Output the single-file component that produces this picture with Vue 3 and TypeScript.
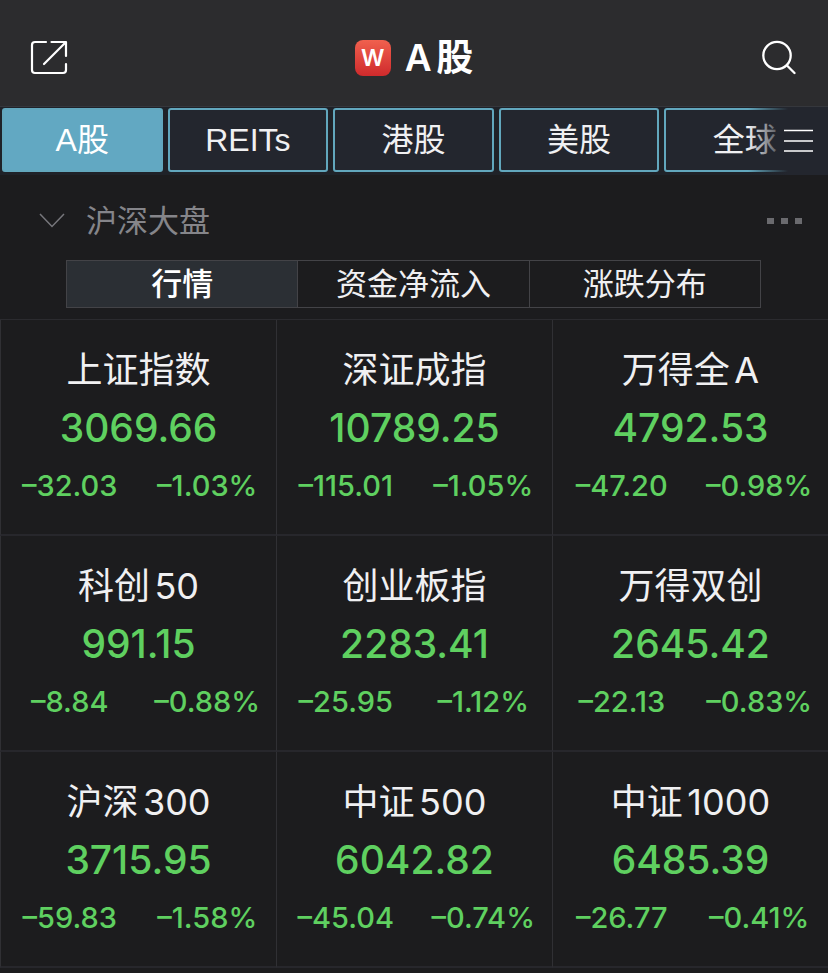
<script setup lang="ts">
import { ref } from 'vue'

interface Quote {
  name: string
  price: string
  change: string
  percent: string
}

const markets: string[] = ['A股', 'REITs', '港股', '美股', '全球']
const views: string[] = ['行情', '资金净流入', '涨跌分布']
const market = ref(0)
const view = ref(0)
const expanded = ref(true)

const quotes: Quote[] = [
  { name: '上证指数', price: '3069.66', change: '–32.03', percent: '–1.03%' },
  { name: '深证成指', price: '10789.25', change: '–115.01', percent: '–1.05%' },
  { name: '万得全A', price: '4792.53', change: '–47.20', percent: '–0.98%' },
  { name: '科创50', price: '991.15', change: '–8.84', percent: '–0.88%' },
  { name: '创业板指', price: '2283.41', change: '–25.95', percent: '–1.12%' },
  { name: '万得双创', price: '2645.42', change: '–22.13', percent: '–0.83%' },
  { name: '沪深300', price: '3715.95', change: '–59.83', percent: '–1.58%' },
  { name: '中证500', price: '6042.82', change: '–45.04', percent: '–0.74%' },
  { name: '中证1000', price: '6485.39', change: '–26.77', percent: '–0.41%' },
]
</script>

<template>
  <div class="app">
    <header class="header">
      <button class="icon-button" type="button" aria-label="分享">
        <svg width="38" height="36" viewBox="0 0 38 36" fill="none" stroke="#fff" stroke-width="2.2" stroke-linecap="round" stroke-linejoin="round">
          <path d="M16 2H5a3 3 0 0 0-3 3v25a3 3 0 0 0 3 3h28a3 3 0 0 0 3-3V24" />
          <path d="M21.500 2H36V16M35.500 2.500 14 24" />
        </svg>
      </button>
      <div class="brand">
        <span class="logo" aria-hidden="true">W</span>
        <h1 class="title">A股</h1>
      </div>
      <button class="icon-button" type="button" aria-label="搜索">
        <svg width="36" height="36" viewBox="0 0 36 36" fill="none" stroke="#fff" stroke-width="2.300" stroke-linecap="round">
          <circle cx="17" cy="15.500" r="13.700" />
          <path d="M27 25.500l7.500 7.500" />
        </svg>
      </button>
    </header>

    <nav class="markets">
      <div class="strip">
        <button
          v-for="(label, i) in markets"
          :key="label"
          type="button"
          class="market"
          :class="{ active: market === i }"
          @click="market = i"
        >{{ label }}</button>
      </div>
      <button class="menu" type="button" aria-label="菜单">
        <svg width="30" height="24" viewBox="0 0 30 24" stroke="#fff" stroke-width="1.600">
          <path d="M1 1.500h29M1 12h29M1 22h29" />
        </svg>
      </button>
    </nav>

    <main>
      <div class="section-head">
        <button class="collapse" type="button" :aria-expanded="expanded" @click="expanded = !expanded">
          <svg width="26" height="15" viewBox="0 0 26 15" fill="none" stroke="#77777c" stroke-width="1.500">
            <path d="M1 1l12 12.500L25 1" />
          </svg>
          <span>沪深大盘</span>
        </button>
        <button class="more" type="button" aria-label="更多">
          <i></i><i></i><i></i>
        </button>
      </div>

      <div class="views">
        <button
          v-for="(label, i) in views"
          :key="label"
          type="button"
          class="view"
          :class="{ active: view === i }"
          @click="view = i"
        >{{ label }}</button>
      </div>

      <section v-show="expanded" class="grid">
        <article v-for="q in quotes" :key="q.name" class="card">
          <h2 class="name">{{ q.name }}</h2>
          <div class="price">{{ q.price }}</div>
          <div class="delta">
            <span>{{ q.change }}</span>
            <span>{{ q.percent }}</span>
          </div>
        </article>
      </section>
    </main>
  </div>
</template>

<style>
body {
  background: #1c1c1e;
}
</style>

<style scoped>
.app {
  min-height: 100vh;
  overflow: hidden;
  background: #1c1c1e;
  color: #f0f0f2;
  font-family: Inter, "Noto Sans CJK SC", sans-serif;
}

button {
  margin: 0;
  padding: 0;
  border: 0;
  background: none;
  color: inherit;
  font: inherit;
  cursor: pointer;
}

svg {
  display: block;
}

.header {
  display: flex;
  align-items: center;
  justify-content: space-between;
  height: 106px;
  padding: 10px 32px 0 30px;
  box-sizing: border-box;
  background: #2c2c2e;
}

.brand {
  display: flex;
  align-items: center;
  gap: 14px;
}

.logo {
  display: grid;
  place-items: center;
  width: 36px;
  height: 36px;
  border-radius: 8px;
  background: linear-gradient(#f0604e, #cf2a2c);
  color: #fff;
  font-size: 23px;
  font-weight: 600;
  line-height: 36px;
}

.title {
  margin: 0;
  font-size: 37px;
  font-weight: 600;
  line-height: 48px;
  text-autospace: normal;
  color: #fff;
}

.markets {
  position: relative;
  overflow: hidden;
  border-top: 1px solid #35373c;
  background: #23262e;
}

.strip {
  display: flex;
  gap: 5px;
  margin-right: -2px;
  padding: 1px 0 3px 2px;
  background: #1f2228;
}

.market {
  flex: 0 0 calc(20% - 5px);
  height: 64px;
  box-sizing: border-box;
  border: 2px solid #62a7bd;
  border-radius: 3px;
  background: #23262e;
  font-family: "Liberation Sans", "Noto Sans CJK SC", sans-serif;
  font-size: 32px;
  line-height: 60px;
}

.market.active {
  background: #62a8c2;
  color: #fff;
}

.menu {
  position: absolute;
  top: 0;
  right: 0;
  bottom: 0;
  display: flex;
  align-items: center;
  justify-content: flex-end;
  width: 80px;
  padding-right: 15px;
  background: linear-gradient(90deg, rgba(35, 38, 46, 0), #23262e 50%);
}

.section-head {
  display: flex;
  align-items: center;
  justify-content: space-between;
  height: 85px;
  padding: 6px 26px 0 39px;
  box-sizing: border-box;
  color: #85858a;
}

.collapse {
  display: flex;
  align-items: center;
  gap: 21px;
  font-size: 31px;
  line-height: 48px;
}

.more {
  display: flex;
  gap: 7px;
}

.more i {
  width: 7px;
  height: 6px;
  background: #6a6a6e;
}

.views {
  display: flex;
  margin: 0 67px 11px 66px;
  border: 1px solid #434347;
}

.view {
  flex: 1;
  height: 46px;
  font-size: 31px;
  font-weight: 400;
  line-height: 46px;
}

.view + .view {
  border-left: 1px solid #434347;
}

.view.active {
  background: #2b2f34;
  color: #fff;
  font-weight: 500;
}

.grid {
  display: grid;
  grid-template-columns: repeat(3, 1fr);
  border-top: 1px solid #2b2b2f;
}

.card {
  height: 216px;
  box-sizing: border-box;
  padding-top: 26px;
  border-left: 1px solid #303034;
  border-bottom: 2px solid #27272c;
  text-align: center;
}

.name {
  margin: 0;
  font-size: 36px;
  font-weight: 400;
  line-height: 48px;
  text-autospace: normal;
}

.price {
  padding-top: 10px;
  color: #5fd060;
  font-size: 39px;
  font-weight: 450;
  line-height: 48px;
}

.delta {
  display: grid;
  grid-template-columns: 1fr 1fr;
  padding-top: 14px;
  color: #5fd060;
  font-size: 29px;
  font-weight: 450;
  line-height: 40px;
}
</style>
